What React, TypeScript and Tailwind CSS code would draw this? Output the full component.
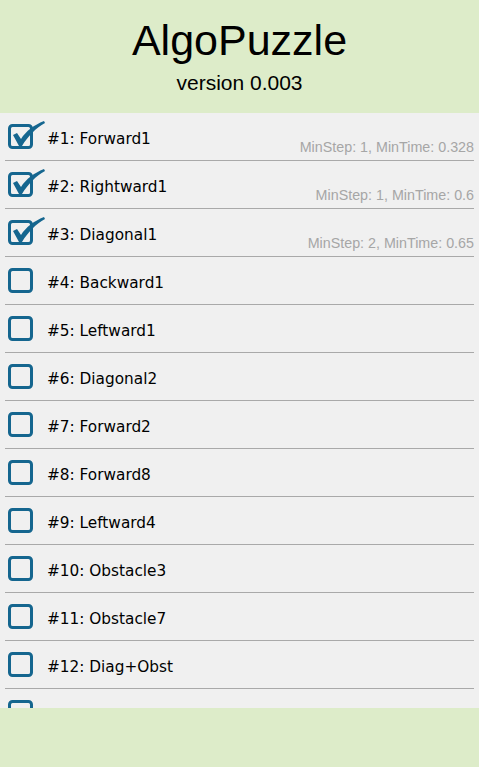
import React from "react";

type Stage = { id: number; name: string; done?: { step: number; time: string } };

const stages: Stage[] = [
  { id: 1, name: "Forward1", done: { step: 1, time: "0.328" } },
  { id: 2, name: "Rightward1", done: { step: 1, time: "0.6" } },
  { id: 3, name: "Diagonal1", done: { step: 2, time: "0.65" } },
  { id: 4, name: "Backward1" },
  { id: 5, name: "Leftward1" },
  { id: 6, name: "Diagonal2" },
  { id: 7, name: "Forward2" },
  { id: 8, name: "Forward8" },
  { id: 9, name: "Leftward4" },
  { id: 10, name: "Obstacle3" },
  { id: 11, name: "Obstacle7" },
  { id: 12, name: "Diag+Obst" },
  { id: 13, name: "Diagonal3" },
];

function CheckBox({ checked }: { checked: boolean }) {
  return (
    <svg width="40" height="28" viewBox="0 0 40 28" className="shrink-0 overflow-visible">
      <rect x="1.5" y="3.5" width="22" height="22" rx="3" fill="none" stroke="#15668f" strokeWidth="3" />
      {checked && (
        <path
          d="M5 13 L9 11 L13 17 C18 9 26 3 36 -1 L37 1 C28 6 20 14 14 24 L11 24 Z"
          fill="#15668f"
        />
      )}
    </svg>
  );
}

export default function App() {
  return (
    <div className="h-[767px] flex flex-col bg-[#ddecc9] overflow-hidden">
      <header
        className="h-[113px] shrink-0 flex flex-col items-center text-black"
        style={{ fontFamily: '"Liberation Sans", Arial, sans-serif' }}
      >
        <h1 className="text-[43px] leading-none mt-[19px]">AlgoPuzzle</h1>
        <p className="text-[21px] leading-none mt-[10px]">version 0.003</p>
      </header>

      <div className="h-[595px] shrink-0 bg-[#f0f0f0] overflow-hidden">
        {stages.map((s) => (
          <div key={s.id} className="h-[48px] mx-[5px] border-b border-[#a9a9a9] flex">
            <div className="flex items-center pl-[3px] pb-[1px]">
              <CheckBox checked={!!s.done} />
              <span
                className="ml-[-1px] mt-[6px] text-[15.3px] text-black"
                style={{ fontFamily: '"DejaVu Sans", sans-serif' }}
              >
                #{s.id}: {s.name}
              </span>
            </div>
            {s.done && (
              <div
                className="ml-auto self-end pb-[6px] text-[14.3px] text-[#a6a6a6] leading-none"
                style={{ fontFamily: '"Liberation Sans", Arial, sans-serif' }}
              >
                MinStep: {s.done.step}, MinTime: {s.done.time}
              </div>
            )}
          </div>
        ))}
      </div>
    </div>
  );
}
